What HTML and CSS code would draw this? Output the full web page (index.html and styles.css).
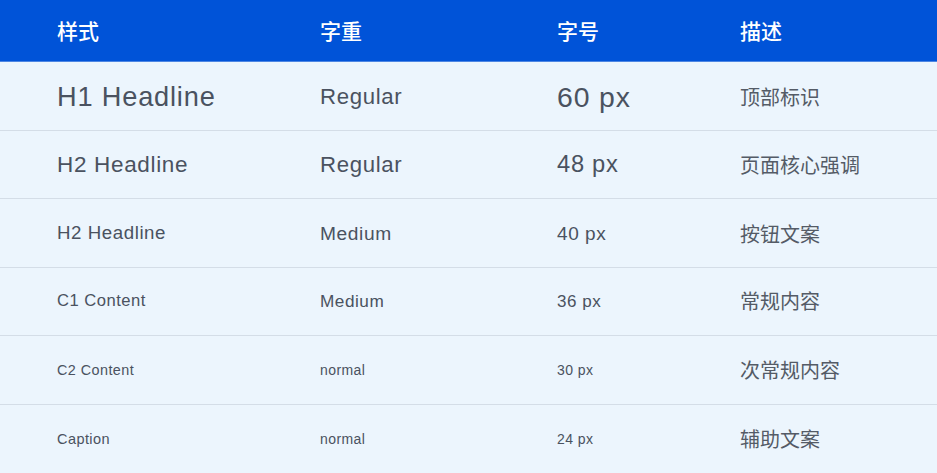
FILE: index.html
```html
<!DOCTYPE html>
<html lang="zh">
<head>
<meta charset="utf-8">
<link rel="stylesheet" href="styles.css">
</head>
<body>
<div class="table">
  <div class="row head">
    <div class="cell">样式</div>
    <div class="cell">字重</div>
    <div class="cell">字号</div>
    <div class="cell">描述</div>
  </div>
  <div class="row r1">
    <div class="cell c1">H1 Headline</div>
    <div class="cell c2">Regular</div>
    <div class="cell c3">60 px</div>
    <div class="cell c4">顶部标识</div>
  </div>
  <div class="row r2">
    <div class="cell c1">H2 Headline</div>
    <div class="cell c2">Regular</div>
    <div class="cell c3">48 px</div>
    <div class="cell c4">页面核心强调</div>
  </div>
  <div class="row r3">
    <div class="cell c1">H2 Headline</div>
    <div class="cell c2">Medium</div>
    <div class="cell c3">40 px</div>
    <div class="cell c4">按钮文案</div>
  </div>
  <div class="row r4">
    <div class="cell c1">C1 Content</div>
    <div class="cell c2">Medium</div>
    <div class="cell c3">36 px</div>
    <div class="cell c4">常规内容</div>
  </div>
  <div class="row r5">
    <div class="cell c1">C2 Content</div>
    <div class="cell c2">normal</div>
    <div class="cell c3">30 px</div>
    <div class="cell c4">次常规内容</div>
  </div>
  <div class="row r6 last">
    <div class="cell c1">Caption</div>
    <div class="cell c2">normal</div>
    <div class="cell c3">24 px</div>
    <div class="cell c4">辅助文案</div>
  </div>
</div>
</body>
</html>
```
FILE: styles.css
```css
html, body {
  margin: 0;
  padding: 0;
  background: #ecf5fd;
}
body {
  font-family: "Liberation Sans", "Noto Sans CJK SC", sans-serif;
  color: #4a5260;
  width: 937px;
  height: 473px;
  overflow: hidden;
}
.table {
  display: flex;
  flex-direction: column;
}
.row {
  display: grid;
  grid-template-columns: 263px 237px 183px 1fr;
  padding-left: 57px;
  padding-top: 2px;
  align-items: center;
  height: 68.5px;
  box-sizing: border-box;
  border-bottom: 1px solid #d4dde7;
  line-height: 1;
}
.row.last {
  border-bottom: none;
}
.cell {
  letter-spacing: 0.03em;
}
.head {
  height: 62px;
  background: #0053d8;
  color: #ffffff;
  border-bottom: 1px solid #4d86e3;
  font-family: "Noto Sans CJK SC", sans-serif;
  font-size: 21px;
  font-weight: 500;
  padding-top: 0;
  padding-bottom: 1px;
}
.head .cell {
  letter-spacing: 0;
}
.row .c4 {
  font-family: "Noto Sans CJK SC", sans-serif;
  font-size: 20px;
  letter-spacing: 0;
  color: #545b66;
}
.r4, .r5, .r6 { padding-top: 0; }
.r1 .c1 { font-size: 27.2px; }
.r1 .c2 { font-size: 22.2px; }
.r1 .c3 { font-size: 28.4px; }
.r2 .c1 { font-size: 22.5px; }
.r2 .c2 { font-size: 22.2px; }
.r2 .c3 { font-size: 23.7px; }
.r3 .c1 { font-size: 18.7px; }
.r3 .c2 { font-size: 19.2px; }
.r3 .c3 { font-size: 19px; }
.r4 .c1 { font-size: 16.6px; }
.r4 .c2 { font-size: 17.2px; }
.r4 .c3 { font-size: 17px; }
.r5 .c1 { font-size: 14.4px; }
.r5 .c2 { font-size: 14px; }
.r5 .c3 { font-size: 14px; }
.r6 .c1 { font-size: 14.5px; }
.r6 .c2 { font-size: 14px; }
.r6 .c3 { font-size: 14px; }
```
